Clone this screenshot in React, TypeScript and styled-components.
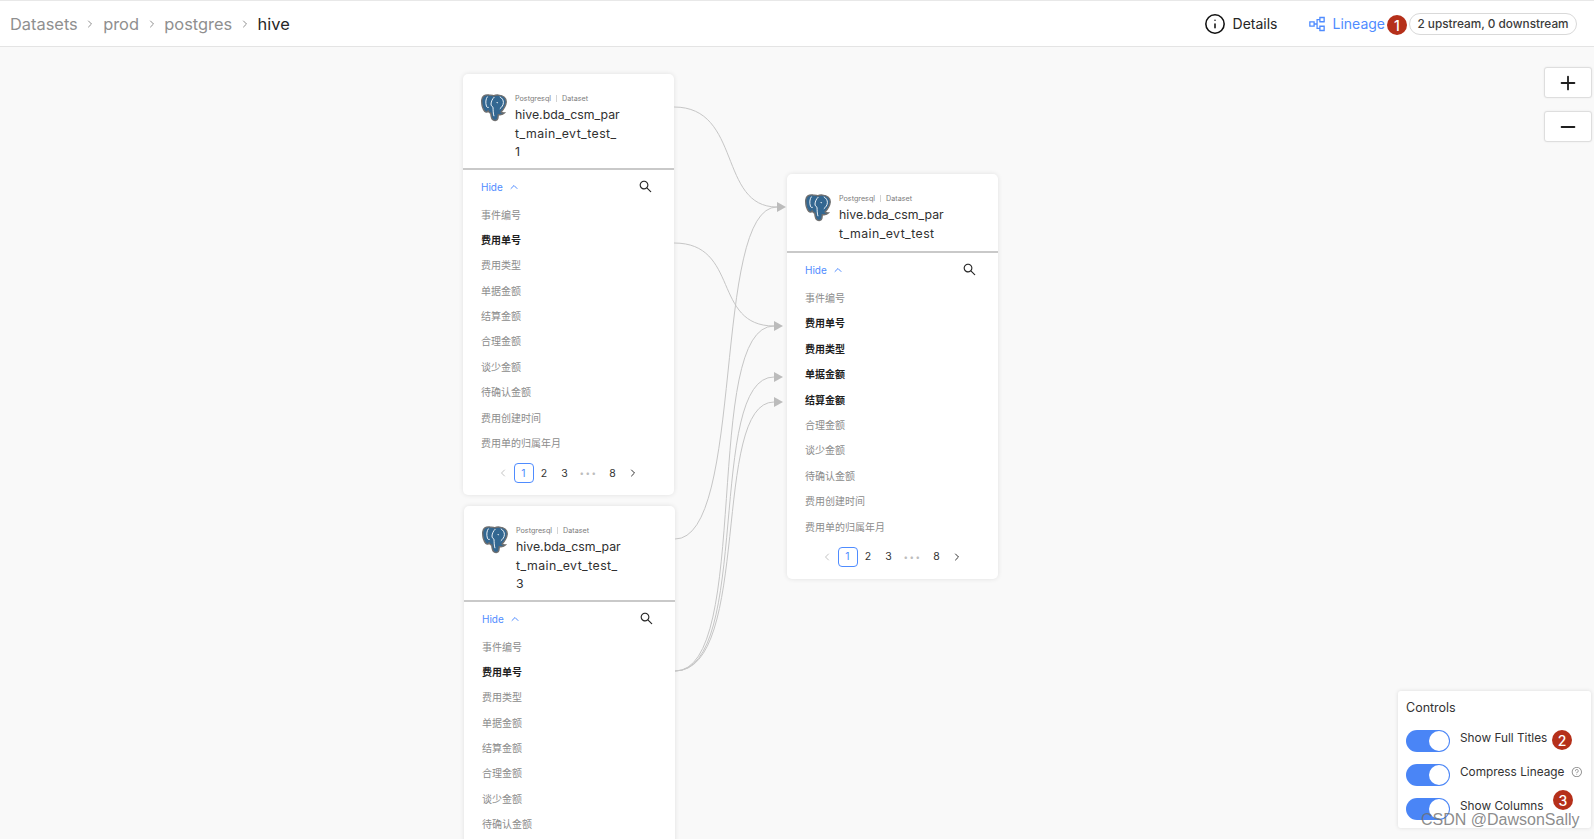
import React from 'react';
import styled, { createGlobalStyle } from 'styled-components';
import { ChevronLeft, ChevronRight, ChevronUp, Info, Minus, Plus } from 'lucide-react';
import { AiOutlinePartition, AiOutlineQuestionCircle, AiOutlineSearch } from 'react-icons/ai';

const GlobalStyle = createGlobalStyle`
  html, body {
    margin: 0;
    padding: 0;
    background: #f9f9f9;
    font-family: Inter, "Noto Sans CJK SC", "Liberation Sans", sans-serif;
  }
  * { box-sizing: border-box; }
`;

const Page = styled.div`
  position: relative;
  width: 1594px;
  height: 839px;
  overflow: hidden;
  display: flex;
  flex-direction: column;
`;

const TopBar = styled.header`
  height: 47px;
  flex: none;
  display: flex;
  align-items: center;
  justify-content: space-between;
  padding: 0 17px 0 10px;
  background: #fff;
  border-top: 1px solid #e8e8e8;
  border-bottom: 1px solid #e4e4e4;
`;

const Breadcrumbs = styled.nav`
  display: flex;
  align-items: center;
  gap: 6.7px;
  font-size: 16.4px;
  color: #8f8f8f;
`;

const CrumbSeparator = styled(ChevronRight)`
  color: #8f8f8f;
`;

const CurrentCrumb = styled.span`
  color: #262626;
`;

const Tabs = styled.div`
  display: flex;
  align-items: center;
`;

const Tab = styled.div<{ $active?: boolean }>`
  display: flex;
  align-items: center;
  gap: ${({ $active }) => ($active ? '6px' : '7px')};
  font-size: 14px;
  color: ${({ $active }) => ($active ? '#4f8cff' : '#262626')};
  margin-right: ${({ $active }) => ($active ? '24px' : '29px')};
`;

const CountPill = styled.div`
  height: 22px;
  width: 168px;
  display: flex;
  align-items: center;
  justify-content: center;
  border: 1px solid #d9d9d9;
  border-radius: 11px;
  font-size: 11.8px;
  font-weight: 500;
  color: #3b3b3b;
`;

const Canvas = styled.main`
  position: relative;
  flex: 1;
  background: #f9f9f9;
`;

const EdgeLayer = styled.svg`
  position: absolute;
  left: 0;
  top: -47px;
  width: 1594px;
  height: 839px;
`;

const NodeCard = styled.section<{ $left: number; $top: number }>`
  position: absolute;
  left: ${({ $left }) => $left}px;
  top: ${({ $top }) => $top}px;
  width: 211px;
  background: #fff;
  border-radius: 5px;
  box-shadow: 0 0 5px rgba(0, 0, 0, 0.1);
`;

const NodeHeader = styled.div`
  display: flex;
  align-items: flex-start;
  gap: 6px;
  min-height: 79px;
  padding: 18px 18px 6px;
  border-bottom: 2px solid #c9c9c9;
`;

const LogoSlot = styled.div`
  flex: none;
  width: 28px;
  height: 28px;
  margin-top: 2px;
`;

const NodeText = styled.div`
  width: 112px;
`;

const NodeMeta = styled.div`
  display: flex;
  align-items: center;
  gap: 5px;
  height: 13px;
  margin-bottom: 1px;
  font-size: 7.2px;
  color: #7b7b7b;
`;

const MetaDivider = styled.span`
  width: 1px;
  height: 7px;
  background: #d4d4d4;
`;

const NodeTitle = styled.div`
  font-size: 12.3px;
  line-height: 18.5px;
  color: #303030;
`;

const TitleLine = styled.div<{ $tracking: number }>`
  letter-spacing: ${({ $tracking }) => $tracking}px;
  white-space: nowrap;
`;

const NodeBody = styled.div`
  padding: 0 18px 12px;
`;

const HideRow = styled.div`
  height: 32px;
  padding: 9px 3px 0 0;
  display: flex;
  align-items: flex-start;
  justify-content: space-between;
`;

const HideToggle = styled.div`
  display: flex;
  align-items: center;
  gap: 5px;
  height: 16px;
  font-size: 10px;
  color: #4f8cff;
`;

const SearchIcon = styled(AiOutlineSearch)`
  color: #262626;
`;

const ColumnRow = styled.div<{ $highlighted: boolean }>`
  height: 25.4px;
  line-height: 25.4px;
  font-size: 10px;
  font-family: "Noto Sans CJK SC", sans-serif;
  font-weight: ${({ $highlighted }) => ($highlighted ? 700 : 400)};
  color: ${({ $highlighted }) => ($highlighted ? '#1f1f1f' : '#8c8c8c')};
`;

const Pager = styled.div`
  display: flex;
  align-items: center;
  justify-content: center;
  gap: 0.5px;
  margin-top: 8px;
  padding-right: 1px;
  height: 20px;
  font-size: 10.5px;
  color: #333;
`;

const PageItem = styled.div<{ $active?: boolean; $muted?: boolean }>`
  width: 20px;
  height: 20px;
  display: flex;
  align-items: center;
  justify-content: center;
  border-radius: 4px;
  border: 1px solid ${({ $active }) => ($active ? '#4f8cff' : 'transparent')};
  color: ${({ $active, $muted }) => ($active ? '#4f8cff' : $muted ? '#c4c4c4' : '#333')};
`;

const PageDots = styled.div`
  width: 27px;
  text-align: center;
  letter-spacing: 1.5px;
  font-size: 8px;
  color: #bdbdbd;
`;

const ZoomStack = styled.div`
  position: absolute;
  top: 20px;
  right: 2px;
  display: flex;
  flex-direction: column;
  gap: 13px;
`;

const ZoomButton = styled.button`
  width: 48px;
  height: 31px;
  padding: 0;
  display: flex;
  align-items: center;
  justify-content: center;
  background: #fff;
  color: #1f1f1f;
  border: 1px solid #dedede;
  border-radius: 3px;
  box-shadow: 0 0 2px rgba(0, 0, 0, 0.08);
`;

const ControlPanel = styled.aside`
  position: absolute;
  right: 3px;
  bottom: 11px;
  width: 193px;
  height: 137px;
  padding: 9px 8px 8px;
  background: #fff;
  border-radius: 3px;
  box-shadow: 0 0 4px rgba(0, 0, 0, 0.12);
`;

const ControlTitle = styled.div`
  font-size: 12.5px;
  line-height: 16px;
  color: #333;
  margin-bottom: 14px;
`;

const ControlRow = styled.div`
  display: flex;
  align-items: flex-start;
  gap: 10px;
  height: 34px;
  font-size: 11.8px;
  line-height: 17px;
  white-space: nowrap;
  color: #333;
`;

const Toggle = styled.div`
  position: relative;
  width: 44px;
  height: 22px;
  flex: none;
  border-radius: 11px;
  background: #4a85f6;

  &::after {
    content: '';
    position: absolute;
    right: 1px;
    top: 1px;
    width: 20px;
    height: 20px;
    border-radius: 50%;
    background: #fff;
  }
`;

const HelpIcon = styled(AiOutlineQuestionCircle)`
  color: #8c8c8c;
  margin: 1px 0 0 -3px;
`;

const StepBadge = styled.div<{ $x: number; $y: number }>`
  position: absolute;
  left: ${({ $x }) => $x - 10}px;
  top: ${({ $y }) => $y - 10}px;
  width: 20px;
  height: 20px;
  border-radius: 50%;
  display: flex;
  align-items: center;
  justify-content: center;
  background: #b5301a;
  color: #fff;
  font-size: 14px;
  font-weight: 500;
`;

const Watermark = styled.div`
  position: absolute;
  left: 1421px;
  top: 811px;
  font-family: "Liberation Sans", sans-serif;
  font-size: 16px;
  line-height: 18px;
  color: rgba(110, 110, 110, 0.8);
`;

const PostgresLogo = () => (
  <svg width="28" height="28" viewBox="0 0 28 28">
    <path
      d="M8 1C4 .4.8 2 .7 6.200c-.1 4 1 8.600 3 11 1.200 1.400 2.700 1 3.500-.2.600 1.200 1.400 2 2.600 2.200.2 2.600.2 5.400 2.400 6.800 1.800 1 4 .6 4.600-1.400.3-1.200.3-2.600.5-4 2.300.4 5 -.2 6.200-1.700-1.400.1-2.800-.2-3.400-.9 2.600-3 4.800-6.400 5.100-9.800.3-3.800-2.800-6.700-7.800-7.100-2.200-.2-3.600.2-4.800.8C11.800 1.200 9.800 1.200 8 1Z"
      fill="#336791"
      stroke="#6f6f6f"
      strokeWidth="1.4"
    />
    <path
      d="M6.500 2.600C4.600 5 4.400 9 5.400 12c.5 1.500 1.600 2 2.400 1.200M13.400 3c-2 1.800-3.200 4.400-3.400 7-.1 1.400 1 2.600 2 3.200.2 3 .1 6.400 1 9M18.800 2.800c2.400 1.400 3.600 3.400 3.600 5.800 0 2.400-1.800 4.800-3.600 6.200M15.800 8.200c0 1 .8 1 .8 0"
      fill="none"
      stroke="#fff"
      strokeWidth="0.9"
    />
  </svg>
);

const COLUMN_NAMES = [
  '事件编号',
  '费用单号',
  '费用类型',
  '单据金额',
  '结算金额',
  '合理金额',
  '谈少金额',
  '待确认金额',
  '费用创建时间',
  '费用单的归属年月',
];

type LineageNode = {
  id: string;
  titleLines: string[];
  left: number;
  top: number;
  highlighted: string[];
};

const NODES: LineageNode[] = [
  {
    id: 'a',
    titleLines: ['hive.bda_csm_par', 't_main_evt_test_', '1'],
    left: 463,
    top: 27,
    highlighted: ['费用单号'],
  },
  {
    id: 'b',
    titleLines: ['hive.bda_csm_par', 't_main_evt_test_', '3'],
    left: 464,
    top: 459,
    highlighted: ['费用单号'],
  },
  {
    id: 'c',
    titleLines: ['hive.bda_csm_par', 't_main_evt_test'],
    left: 787,
    top: 127,
    highlighted: ['费用单号', '费用类型', '单据金额', '结算金额'],
  },
];

const EDGES = [
  'M674 107C742 107 718 207 777 207',
  'M674 243C740 243 712 326 774 326',
  'M675 539C745 539 712 207 777 207',
  'M675 671C752 671 702 326 774 326',
  'M675 671C752 671 706 377 774 377',
  'M675 671C752 671 711 402 774 402',
];

const ARROWS = [
  '777,202 786,207 777,212',
  '774,321 783,326 774,331',
  '774,372 783,377 774,382',
  '774,397 783,402 774,407',
];

const Node = ({ node }: { node: LineageNode }) => (
  <NodeCard $left={node.left} $top={node.top}>
    <NodeHeader>
      <LogoSlot>
        <PostgresLogo />
      </LogoSlot>
      <NodeText>
        <NodeMeta>
          <span>Postgresql</span>
          <MetaDivider />
          <span>Dataset</span>
        </NodeMeta>
        <NodeTitle>
          {node.titleLines.map((line, index) => (
            <TitleLine key={line} $tracking={index === 1 ? 0.45 : 0}>
              {line}
            </TitleLine>
          ))}
        </NodeTitle>
      </NodeText>
    </NodeHeader>
    <NodeBody>
      <HideRow>
        <HideToggle>
          Hide <ChevronUp size={12} />
        </HideToggle>
        <SearchIcon size={15} />
      </HideRow>
      {COLUMN_NAMES.map((name) => (
        <ColumnRow key={name} $highlighted={node.highlighted.includes(name)}>
          {name}
        </ColumnRow>
      ))}
      <Pager>
        <PageItem $muted>
          <ChevronLeft size={12} />
        </PageItem>
        <PageItem $active>1</PageItem>
        <PageItem>2</PageItem>
        <PageItem>3</PageItem>
        <PageDots>•••</PageDots>
        <PageItem>8</PageItem>
        <PageItem>
          <ChevronRight size={12} />
        </PageItem>
      </Pager>
    </NodeBody>
  </NodeCard>
);

export default function App() {
  return (
    <Page>
      <GlobalStyle />
      <TopBar>
        <Breadcrumbs>
          <span>Datasets</span>
          <CrumbSeparator size={12} />
          <span>prod</span>
          <CrumbSeparator size={12} />
          <span>postgres</span>
          <CrumbSeparator size={12} />
          <CurrentCrumb>hive</CurrentCrumb>
        </Breadcrumbs>
        <Tabs>
          <Tab>
            <Info size={22} strokeWidth={1.7} color="#111" />
            Details
          </Tab>
          <Tab $active>
            <AiOutlinePartition size={20} />
            Lineage
          </Tab>
          <CountPill>2 upstream, 0 downstream</CountPill>
        </Tabs>
      </TopBar>
      <Canvas>
        {NODES.map((node) => (
          <Node key={node.id} node={node} />
        ))}
        <EdgeLayer viewBox="0 0 1594 839">
          {EDGES.map((d) => (
            <path key={d} d={d} fill="none" stroke="#c6c6c6" strokeWidth="1" />
          ))}
          {ARROWS.map((points) => (
            <polygon key={points} points={points} fill="#bcbcbc" />
          ))}
        </EdgeLayer>
        <ZoomStack>
          <ZoomButton>
            <Plus size={22} />
          </ZoomButton>
          <ZoomButton>
            <Minus size={22} />
          </ZoomButton>
        </ZoomStack>
        <ControlPanel>
          <ControlTitle>Controls</ControlTitle>
          <ControlRow>
            <Toggle />
            Show Full Titles
          </ControlRow>
          <ControlRow>
            <Toggle />
            Compress Lineage
            <HelpIcon size={14} />
          </ControlRow>
          <ControlRow>
            <Toggle />
            Show Columns
          </ControlRow>
        </ControlPanel>
      </Canvas>
      <StepBadge $x={1397} $y={25}>1</StepBadge>
      <StepBadge $x={1562} $y={740}>2</StepBadge>
      <StepBadge $x={1563} $y={800}>3</StepBadge>
      <Watermark>CSDN @DawsonSally</Watermark>
    </Page>
  );
}
